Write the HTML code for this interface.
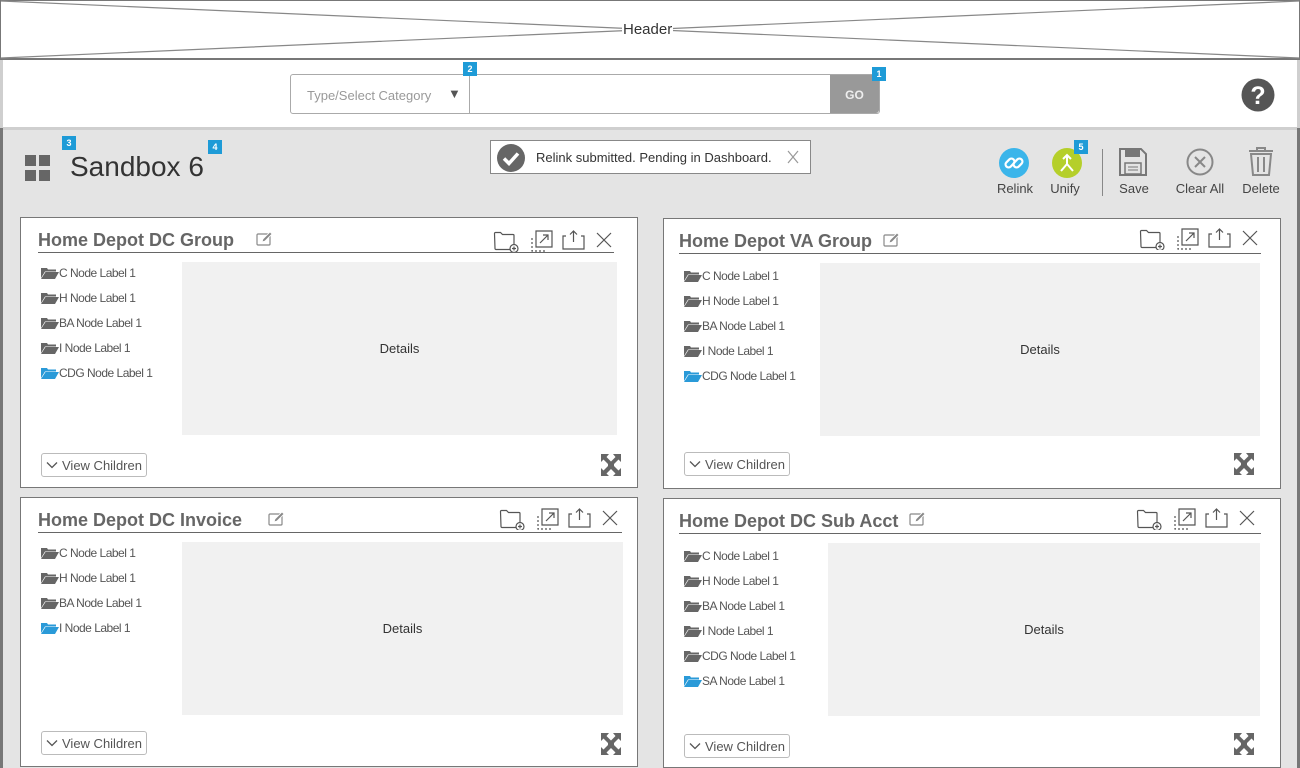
<!DOCTYPE html>
<html><head><meta charset="utf-8"><style>
*{margin:0;padding:0;box-sizing:border-box}
body{width:1300px;height:768px;overflow:hidden;position:relative;background:#e4e4e4;font-family:"Liberation Sans",Arial,sans-serif;color:#333}
.a{position:absolute}
.badge{position:absolute;width:14px;height:14px;background:#1e9bd7;color:#fff;font-size:9px;font-weight:bold;text-align:center;line-height:14px}
.panel{position:absolute;background:#fff;border:1px solid #777}
.title{position:absolute;font-size:18px;font-weight:bold;color:#666;white-space:nowrap}
.uline{position:absolute;height:1px;background:#666}
.det{position:absolute;background:#f1f1f1;font-size:13px;color:#333;display:flex;align-items:center;justify-content:center}
.node{position:absolute;font-size:12px;color:#555;letter-spacing:-0.5px;white-space:nowrap;display:flex;align-items:center}
.node svg{margin-right:0}
.vc{position:absolute;width:106px;height:24px;border:1px solid #bbb;border-radius:3px;font-size:13px;color:#555;display:flex;align-items:center;padding-left:4px;background:#fff}
.tb{position:absolute;font-size:13px;color:#444;text-align:center}
</style></head><body>
<svg width="0" height="0" style="position:absolute">
<defs>
<symbol id="fold" viewBox="0 0 18 12"><path d="M0 1h6l1 1.5h8v2H4L0 11z M4.5 5H18L14 12H0z" fill="currentColor"/></symbol>
<symbol id="icons" viewBox="0 0 122 24">
<g fill="none" stroke="#555" stroke-width="1.2">
<path d="M1.5 5.5a1 1 0 0 1 1-1h5l2 2h10.5a1 1 0 0 1 1 1v13a1 1 0 0 1-1 1h-17a1 1 0 0 1-1-1z"/>
<circle cx="21" cy="20.5" r="4" fill="#fff"/><path d="M21 18.5v4M19 20.5h4"/>
<path d="M43 3h16v16H43z"/><path d="M47 15l8-8M50 7h5v5"/>
<path d="M39 10v13h14" stroke-dasharray="2 2"/>
<path d="M73 8h-3v13h21V8h-3M80.5 3v11M77 6.5l3.5-3.5 3.5 3.5"/>
<path d="M104 5l14 14M118 5l-14 14"/>
</g></symbol>
<symbol id="edit" viewBox="0 0 18 14"><g fill="none" stroke="#888" stroke-width="1.2"><rect x="1" y="2" width="13" height="11" rx="1"/></g><path d="M6 10l1-3 7-7 2 2-7 7z" fill="#888" stroke="#fff" stroke-width="0.8"/></symbol>
<symbol id="exp" viewBox="0 0 20 22"><path d="M0 0h8L5.5 3 10 7.5 14.5 3 12 0h8v8l-2.5-2.5L13 10l0 2 4.5 4.5L20 14v8h-8l2.5-2.5L10 15l-4.5 4.5L8 22H0v-8l2.5 2.5L7 12V10L2.5 5.5 0 8z" fill="#666"/></symbol>
<symbol id="chev" viewBox="0 0 12 8"><path d="M1 1.5l5 5 5-5" fill="none" stroke="#555" stroke-width="1.3"/></symbol>
</defs></svg>

<!-- header -->
<div class="a" style="left:0;top:0;width:1300px;height:60px;background:#fff;border:1px solid #777;border-bottom:2px solid #777"></div>
<svg class="a" style="left:0;top:0" width="1300" height="60"><path d="M1 1L1299 58M1 58L1299 1" stroke="#888" stroke-width="1.2"/></svg>
<div class="a" style="left:622px;top:21px;background:#fff;font-size:15px;color:#333;padding:0 1px">Header</div>

<!-- search bar -->
<div class="a" style="left:0;top:60px;width:1300px;height:70px;background:#fff;border:3px solid #cfcfcf;border-top:none"></div>
<div class="a" style="left:290px;top:74px;width:590px;height:40px;border:1px solid #aaa;border-radius:3px;background:#fff"></div>
<div class="a" style="left:469px;top:75px;width:1px;height:38px;background:#aaa"></div>
<div class="a" style="left:307px;top:88px;font-size:13px;color:#999">Type/Select Category</div>
<div class="a" style="left:448px;top:86px;font-size:13px;color:#555">▼</div>
<div class="a" style="left:830px;top:75px;width:49px;height:38px;background:#999;border-radius:0 3px 3px 0;color:#eee;font-size:12px;font-weight:bold;text-align:center;line-height:40px">GO</div>
<div class="badge" style="left:463px;top:62px">2</div>
<div class="badge" style="left:872px;top:67px">1</div>
<svg class="a" style="left:1241px;top:78px" width="34" height="34"><circle cx="17" cy="17" r="16.5" fill="#555"/><text x="17" y="26" text-anchor="middle" font-family="Liberation Sans" font-weight="bold" font-size="25" fill="#fff">?</text></svg>

<!-- main area borders -->
<div class="a" style="left:0;top:128px;width:3px;height:640px;background:#777"></div>
<div class="a" style="left:1297px;top:128px;width:3px;height:640px;background:#777"></div>

<!-- toolbar -->
<svg class="a" style="left:25px;top:155px" width="26" height="27"><g fill="#666"><rect x="0" y="0" width="11" height="11"/><rect x="14" y="0" width="11" height="11"/><rect x="0" y="15" width="11" height="11"/><rect x="14" y="15" width="11" height="11"/></g></svg>
<div class="a" style="left:70px;top:151px;font-size:28px;color:#333">Sandbox 6</div>
<div class="badge" style="left:62px;top:136px">3</div>
<div class="badge" style="left:208px;top:140px">4</div>

<div class="a" style="left:490px;top:140px;width:321px;height:34px;background:#fff;border:1px solid #888"></div>
<svg class="a" style="left:496px;top:143px" width="30" height="30"><circle cx="15" cy="15" r="14" fill="#666"/><path d="M8 15.5l5 5 9-10" fill="none" stroke="#fff" stroke-width="3.5"/></svg>
<div class="a" style="left:536px;top:150px;font-size:13px;color:#333">Relink submitted. Pending in Dashboard.</div>
<svg class="a" style="left:787px;top:150px" width="12" height="14"><path d="M1 1l10 12M11 1L1 13" stroke="#999" stroke-width="1.2"/></svg>

<svg class="a" style="left:999px;top:148px" width="30" height="30"><circle cx="15" cy="15" r="15" fill="#3bb5ea"/><g fill="none" stroke="#fff" stroke-width="2.2"><rect x="6" y="12" width="10" height="6" rx="3" transform="rotate(-45 11 15)"/><rect x="14" y="12" width="10" height="6" rx="3" transform="rotate(-45 19 15)"/></g></svg>
<div class="tb" style="left:996px;top:181px;width:38px">Relink</div>
<svg class="a" style="left:1052px;top:148px" width="30" height="30"><circle cx="15" cy="15" r="15" fill="#b5cf2a"/><path d="M15 7v9M11 11l4-4 4 4M15 16l-6 7M15 16l6 7" fill="none" stroke="#fff" stroke-width="2"/></svg>
<div class="tb" style="left:1046px;top:181px;width:38px">Unify</div>
<div class="badge" style="left:1074px;top:140px">5</div>
<div class="a" style="left:1102px;top:149px;width:1px;height:47px;background:#888"></div>
<svg class="a" style="left:1119px;top:148px" width="28" height="28"><path d="M1 1h21l5 5v21H1z" fill="none" stroke="#777" stroke-width="2"/><rect x="6" y="1" width="15" height="8" fill="#777"/><rect x="6" y="15" width="16" height="11" fill="none" stroke="#777" stroke-width="1.5"/><path d="M9 19h10M9 22h10" stroke="#777"/></svg>
<div class="tb" style="left:1114px;top:181px;width:40px">Save</div>
<svg class="a" style="left:1186px;top:148px" width="28" height="28"><circle cx="14" cy="14" r="12.5" fill="none" stroke="#888" stroke-width="2"/><path d="M9 9l10 10M19 9L9 19" stroke="#888" stroke-width="2"/></svg>
<div class="tb" style="left:1170px;top:181px;width:60px">Clear All</div>
<svg class="a" style="left:1248px;top:147px" width="26" height="29"><path d="M1 4h24M9 4V1h8v3" fill="none" stroke="#888" stroke-width="2"/><path d="M3 7h20l-2 21H5z" fill="none" stroke="#888" stroke-width="2"/><path d="M10 10v15M16 10v15" stroke="#888" stroke-width="2"/></svg>
<div class="tb" style="left:1236px;top:181px;width:50px">Delete</div>

<!-- Panel 1 -->
<div class="panel" style="left:20px;top:217px;width:618px;height:271px"></div>
<div class="title" style="left:38px;top:230px">Home Depot DC Group</div>
<svg class="a" style="left:256px;top:232px" width="18" height="14"><use href="#edit"/></svg>
<svg class="a" style="left:493px;top:228px" width="122" height="24"><use href="#icons"/></svg>
<div class="uline" style="left:38px;top:252px;width:576px"></div>
<div class="det" style="left:182px;top:262px;width:435px;height:173px">Details</div>
<div class="node" style="left:41px;top:266px"><svg width="18" height="12" style="color:#666"><use href="#fold"/></svg>C Node Label 1</div>
<div class="node" style="left:41px;top:291px"><svg width="18" height="12" style="color:#666"><use href="#fold"/></svg>H Node Label 1</div>
<div class="node" style="left:41px;top:316px"><svg width="18" height="12" style="color:#666"><use href="#fold"/></svg>BA Node Label 1</div>
<div class="node" style="left:41px;top:341px"><svg width="18" height="12" style="color:#666"><use href="#fold"/></svg>I Node Label 1</div>
<div class="node" style="left:41px;top:366px"><svg width="18" height="12" style="color:#2a9ad8"><use href="#fold"/></svg>CDG Node Label 1</div>
<div class="vc" style="left:41px;top:453px"><svg width="12" height="8" style="margin-right:4px"><use href="#chev"/></svg>View Children</div>
<svg class="a" style="left:601px;top:454px" width="20" height="22"><use href="#exp"/></svg>

<!-- Panel 2 -->
<div class="panel" style="left:663px;top:218px;width:618px;height:271px"></div>
<div class="title" style="left:679px;top:231px">Home Depot VA Group</div>
<svg class="a" style="left:883px;top:233px" width="18" height="14"><use href="#edit"/></svg>
<svg class="a" style="left:1139px;top:226px" width="122" height="24"><use href="#icons"/></svg>
<div class="uline" style="left:679px;top:253px;width:582px"></div>
<div class="det" style="left:820px;top:263px;width:440px;height:173px">Details</div>
<div class="node" style="left:684px;top:269px"><svg width="18" height="12" style="color:#666"><use href="#fold"/></svg>C Node Label 1</div>
<div class="node" style="left:684px;top:294px"><svg width="18" height="12" style="color:#666"><use href="#fold"/></svg>H Node Label 1</div>
<div class="node" style="left:684px;top:319px"><svg width="18" height="12" style="color:#666"><use href="#fold"/></svg>BA Node Label 1</div>
<div class="node" style="left:684px;top:344px"><svg width="18" height="12" style="color:#666"><use href="#fold"/></svg>I Node Label 1</div>
<div class="node" style="left:684px;top:369px"><svg width="18" height="12" style="color:#2a9ad8"><use href="#fold"/></svg>CDG Node Label 1</div>
<div class="vc" style="left:684px;top:452px"><svg width="12" height="8" style="margin-right:4px"><use href="#chev"/></svg>View Children</div>
<svg class="a" style="left:1234px;top:453px" width="20" height="22"><use href="#exp"/></svg>

<!-- Panel 3 -->
<div class="panel" style="left:20px;top:497px;width:618px;height:270px"></div>
<div class="title" style="left:38px;top:510px">Home Depot DC Invoice</div>
<svg class="a" style="left:268px;top:512px" width="18" height="14"><use href="#edit"/></svg>
<svg class="a" style="left:499px;top:506px" width="122" height="24"><use href="#icons"/></svg>
<div class="uline" style="left:38px;top:532px;width:584px"></div>
<div class="det" style="left:182px;top:542px;width:441px;height:173px">Details</div>
<div class="node" style="left:41px;top:546px"><svg width="18" height="12" style="color:#666"><use href="#fold"/></svg>C Node Label 1</div>
<div class="node" style="left:41px;top:571px"><svg width="18" height="12" style="color:#666"><use href="#fold"/></svg>H Node Label 1</div>
<div class="node" style="left:41px;top:596px"><svg width="18" height="12" style="color:#666"><use href="#fold"/></svg>BA Node Label 1</div>
<div class="node" style="left:41px;top:621px"><svg width="18" height="12" style="color:#2a9ad8"><use href="#fold"/></svg>I Node Label 1</div>
<div class="vc" style="left:41px;top:731px"><svg width="12" height="8" style="margin-right:4px"><use href="#chev"/></svg>View Children</div>
<svg class="a" style="left:601px;top:733px" width="20" height="22"><use href="#exp"/></svg>

<!-- Panel 4 -->
<div class="panel" style="left:663px;top:498px;width:618px;height:270px"></div>
<div class="title" style="left:679px;top:511px">Home Depot DC Sub Acct</div>
<svg class="a" style="left:909px;top:512px" width="18" height="14"><use href="#edit"/></svg>
<svg class="a" style="left:1136px;top:506px" width="122" height="24"><use href="#icons"/></svg>
<div class="uline" style="left:679px;top:533px;width:582px"></div>
<div class="det" style="left:828px;top:543px;width:432px;height:173px">Details</div>
<div class="node" style="left:684px;top:549px"><svg width="18" height="12" style="color:#666"><use href="#fold"/></svg>C Node Label 1</div>
<div class="node" style="left:684px;top:574px"><svg width="18" height="12" style="color:#666"><use href="#fold"/></svg>H Node Label 1</div>
<div class="node" style="left:684px;top:599px"><svg width="18" height="12" style="color:#666"><use href="#fold"/></svg>BA Node Label 1</div>
<div class="node" style="left:684px;top:624px"><svg width="18" height="12" style="color:#666"><use href="#fold"/></svg>I Node Label 1</div>
<div class="node" style="left:684px;top:649px"><svg width="18" height="12" style="color:#666"><use href="#fold"/></svg>CDG Node Label 1</div>
<div class="node" style="left:684px;top:674px"><svg width="18" height="12" style="color:#2a9ad8"><use href="#fold"/></svg>SA Node Label 1</div>
<div class="vc" style="left:684px;top:734px"><svg width="12" height="8" style="margin-right:4px"><use href="#chev"/></svg>View Children</div>
<svg class="a" style="left:1234px;top:733px" width="20" height="22"><use href="#exp"/></svg>
</body></html>
